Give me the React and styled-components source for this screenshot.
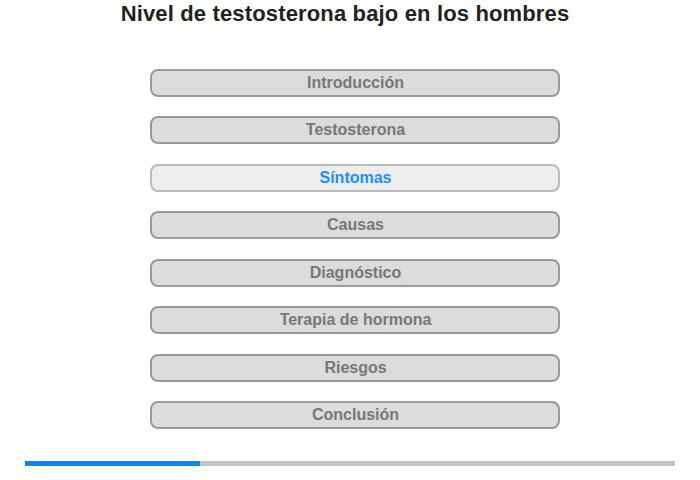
import React from "react";
import styled, { createGlobalStyle } from "styled-components";

const Global = createGlobalStyle`
  html, body { margin: 0; padding: 0; background: #fff; }
  body { font-family: "Liberation Sans", Arial, sans-serif; }
`;

const Page = styled.div`
  width: 700px;
  height: 480px;
  display: flex;
  flex-direction: column;
  align-items: center;
`;

const Title = styled.h1`
  margin: 1px 0 0 -10px;
  font-size: 22px;
  line-height: 26px;
  font-weight: bold;
  color: #222;
  letter-spacing: 0.15px;
`;

const Menu = styled.nav`
  margin: 42px 0 0 10px;
  display: flex;
  flex-direction: column;
  gap: 19.45px;
`;

const Item = styled.div`
  box-sizing: border-box;
  width: 410px;
  height: 28px;
  border: 2px solid ${(p) => (p.$active ? "#bbb" : "#999")};
  border-radius: 8px;
  background: ${(p) => (p.$active ? "#ededed" : "#dcdcdc")};
  color: ${(p) => (p.$active ? "#1e90ff" : "#777")};
  font-size: 16px;
  font-weight: bold;
  display: flex;
  align-items: center;
  justify-content: center;
  padding-left: 1px;
`;

const Track = styled.div`
  margin-top: 32px;
  width: 650px;
  height: 5px;
  background: #c4c4c4;
  display: flex;
`;

const Fill = styled.div`
  height: 100%;
  background: #0088ff;
`;

const items = [
  "Introducción",
  "Testosterona",
  "Síntomas",
  "Causas",
  "Diagnóstico",
  "Terapia de hormona",
  "Riesgos",
  "Conclusión",
];

export default function App() {
  return (
    <>
      <Global />
      <Page>
        <Title>Nivel de testosterona bajo en los hombres</Title>
        <Menu>
          {items.map((t, i) => (
            <Item key={t} $active={i === 2}>
              {t}
            </Item>
          ))}
        </Menu>
        <Track>
          <Fill style={{ width: "175px" }} />
        </Track>
      </Page>
    </>
  );
}
